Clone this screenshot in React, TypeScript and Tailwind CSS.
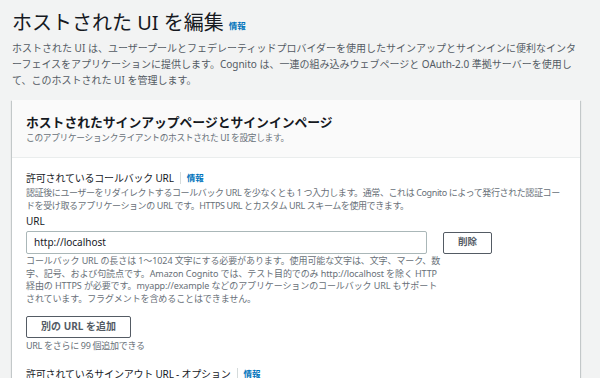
const Info = ({ className = '' }: { className?: string }) => (
  <span className={`text-[#0073bb] font-bold text-[8.5px] leading-[12px] ${className}`}>情報</span>
);

const FieldLabel = ({ text }: { text: string }) => (
  <div className="flex items-center h-[16px] text-[10px] leading-[16px] tracking-[-0.2px] text-[#16191f]">
    <span className="whitespace-nowrap">{text}</span>
    <span className="ml-[6px] h-[12px] w-px bg-[#d5dbdb]" />
    <Info className="ml-[6px] tracking-normal" />
  </div>
);

export default function App() {
  return (
    <div className="w-[600px] h-[378px] overflow-hidden bg-[#f2f3f3] font-['Noto_Sans','Noto_Sans_CJK_JP',sans-serif]">
      <div className="px-[12px] pt-[5px]">
        {/* TITLE */}
        <div className="h-[35px] flex items-center">
          <h1 className="text-[20px] leading-[34px] text-[#16191f] font-normal whitespace-nowrap">ホストされた UI を編集</h1>
          <Info className="ml-[5px] mt-[7px]" />
        </div>
        <div className="text-[10px] leading-[16px] text-[#545b64] whitespace-nowrap">
          <div>ホストされた UI は、ユーザープールとフェデレーティッドプロバイダーを使用したサインアップとサインインに便利なインタ</div>
          <div>ーフェイスをアプリケーションに提供します。Cognito は、一連の組み込みウェブページと OAuth-2.0 準拠サーバーを使用し</div>
          <div>て、このホストされた UI を管理します。</div>
        </div>

        {/* CARD */}
        <div className="mt-[12px] w-[568px] bg-white shadow-[0_1px_1px_0_rgba(0,28,36,0.3),1px_1px_1px_0_rgba(0,28,36,0.15),-1px_1px_1px_0_rgba(0,28,36,0.15)]">
          <div className="bg-[#fafafa] border-b border-[#eaeded] px-[14px] pt-[12px] pb-[13px]">
            <div className="h-[20px] text-[12.8px] leading-[20px] font-bold text-[#16191f] whitespace-nowrap">ホストされたサインアップページとサインインページ</div>
            <div className="h-[12px] text-[8.7px] leading-[12px] tracking-[-0.3px] text-[#687078] whitespace-nowrap">このアプリケーションクライアントのホストされた UI を設定します。</div>
          </div>

          <div className="px-[14px] pt-[12px] pb-[20px]">
            <FieldLabel text="許可されているコールバック URL" />
            <div className="text-[9px] leading-[13px] tracking-[-0.4px] text-[#687078] whitespace-nowrap">
              <div>認証後にユーザーをリダイレクトするコールバック URL を少なくとも 1 つ入力します。通常、これは Cognito によって発行された認証コー</div>
              <div>ドを受け取るアプリケーションの URL です。HTTPS URL とカスタム URL スキームを使用できます。</div>
            </div>
            <div className="mt-[2px] h-[14px] text-[10px] leading-[14px] text-[#16191f]">URL</div>
            <div className="mt-[3px] flex items-center gap-[16px]">
              <div className="w-[401px] h-[23px] border border-[#aab7b8] rounded-[2px] bg-white flex items-center px-[7px] text-[10px] text-[#16191f]">
                http://localhost
              </div>
              <button className="w-[49px] h-[22px] border border-[#545b64] rounded-[2px] bg-white text-[9.5px] font-bold text-[#545b64]">削除</button>
            </div>
            <div className="mt-[1px] text-[9px] leading-[12.7px] tracking-[-0.1px] text-[#687078] whitespace-nowrap">
              <div>コールバック URL の長さは 1～1024 文字にする必要があります。使用可能な文字は、文字、マーク、数</div>
              <div>字、記号、および句読点です。Amazon Cognito では、テスト目的でのみ http://localhost を除く HTTP</div>
              <div>経由の HTTPS が必要です。myapp://example などのアプリケーションのコールバック URL もサポート</div>
              <div>されています。フラグメントを含めることはできません。</div>
            </div>
            <button className="mt-[10px] w-[105px] h-[22px] border border-[#545b64] rounded-[2px] bg-white text-[10px] font-bold text-[#545b64] whitespace-nowrap">別の URL を追加</button>
            <div className="mt-[2px] h-[12px] text-[9px] leading-[12px] tracking-[-0.3px] text-[#687078] whitespace-nowrap">URL をさらに 99 個追加できる</div>
            <div className="mt-[14px]">
              <FieldLabel text="許可されているサインアウト URL - オプション" />
            </div>
          </div>
        </div>
      </div>
    </div>
  );
}
